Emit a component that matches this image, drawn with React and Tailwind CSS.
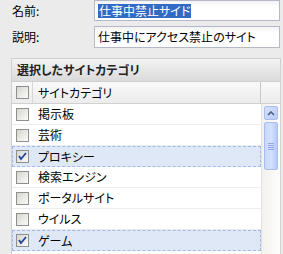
const rows = [
    { name: "掲示板", checked: false },
    { name: "芸術", checked: false },
    { name: "プロキシー", checked: true },
    { name: "検索エンジン", checked: false },
    { name: "ポータルサイト", checked: false },
    { name: "ウイルス", checked: false },
    { name: "ゲーム", checked: true },
];

function Checkbox({ checked }) {
    return (
        <span className="relative block w-[13px] h-[13px] border border-[#8e8f8f] bg-linear-to-br from-[#d6d6d0] to-[#fbfbf9]">
            {checked && (
                <svg className="absolute left-0 top-0" width="11" height="11" viewBox="0 0 11 11">
                    <polyline
                        points="2,5 4,8 9,2"
                        fill="none"
                        stroke="#21429a"
                        strokeWidth="1.8"
                    />
                </svg>
            )}
        </span>
    );
}

function FormRow({ label, height, children }) {
    return (
        <div className={`flex items-center ${height}`}>
            <label className="w-[94px] pl-[12px] text-[12px] leading-none text-black">
                {label}
            </label>
            <div className="flex items-center w-[186px] h-full border border-[#b5b8c8] bg-linear-to-b from-[#f2f2f2] to-white to-30% pl-[3px] text-[12px] leading-none text-black">
                {children}
            </div>
        </div>
    );
}

function Scrollbar() {
    return (
        <div className="w-[19px] bg-linear-to-r from-[#f3f1ec] to-[#fefefe] border-l border-[#e4e2dc] flex flex-col items-center pt-[2px]">
            <div className="w-[14px] h-[14px] rounded-[2px] border border-[#a9bdf1] bg-linear-to-br from-[#d6e1fd] to-[#b9cbf8] flex items-center justify-center">
                <svg width="8" height="5" viewBox="0 0 8 5">
                    <polyline points="1,4 4,1 7,4" fill="none" stroke="#4d6185" strokeWidth="1.6" />
                </svg>
            </div>
            <div className="mt-[2px] w-[14px] h-[48px] rounded-[2px] border border-[#a9bdf1] bg-linear-to-r from-[#c9d7fc] via-[#d4e0fd] to-[#b7c9f7] flex flex-col items-center justify-center gap-[1px]">
                <span className="block w-[6px] h-px bg-[#8fa6e6]" />
                <span className="block w-[6px] h-px bg-[#8fa6e6]" />
                <span className="block w-[6px] h-px bg-[#8fa6e6]" />
                <span className="block w-[6px] h-px bg-[#8fa6e6]" />
            </div>
        </div>
    );
}

export default function App() {
    return (
        <div
            className="w-[283px] h-[254px] overflow-hidden bg-[#ebebeb] [font-feature-settings:'palt']"
            style={{ fontFamily: "'Noto Sans CJK JP', 'Noto Sans', sans-serif" }}
        >
            <FormRow label="名前:" height="h-[21px]">
                <span className="bg-[#316ac5] text-white px-px py-[1px]">仕事中禁止サイド</span>
            </FormRow>
            <div className="h-[5px]" />
            <FormRow label="説明:" height="h-[22px]">
                仕事中にアクセス禁止のサイト
            </FormRow>

            <div className="mt-[10px] ml-[11px] w-[270px] border border-[#d0d0d0] border-b-0">
                <div className="h-[23px] flex items-center pl-[5px] bg-linear-to-b from-[#f3f3f3] to-[#dadada] border-b border-[#d0d0d0] text-[12px] font-bold leading-none text-[#222]">
                    選択したサイトカテゴリ
                </div>
                <div className="h-[22px] flex bg-linear-to-b from-[#f9f9f9] to-[#ececec] border-b border-[#d0d0d0]">
                    <div className="w-[21px] flex items-center pl-[4px] border-r border-[#d6d6d6]">
                        <Checkbox checked={false} />
                    </div>
                    <div className="w-[228px] flex items-center pl-[5px] border-r border-[#c8c8c8] text-[12px] leading-none text-black">
                        サイトカテゴリ
                    </div>
                    <div className="flex-1" />
                </div>
                <div className="flex h-[160px]">
                    <div className="w-[250px] bg-white">
                        {rows.map((row) => (
                            <div
                                key={row.name}
                                className={`h-[21px] flex items-center ${
                                    row.checked
                                        ? "bg-[#dfe8f6] border border-dashed border-[#a3bae9]"
                                        : "border-b border-[#ededed]"
                                }`}
                            >
                                <div className={`${row.checked ? "w-[20px] pl-[3px]" : "w-[21px] pl-[4px]"}`}>
                                    <Checkbox checked={row.checked} />
                                </div>
                                <span className="pl-[5px] text-[12px] leading-none text-black">
                                    {row.name}
                                </span>
                            </div>
                        ))}
                    </div>
                    <Scrollbar />
                </div>
            </div>
        </div>
    );
}
